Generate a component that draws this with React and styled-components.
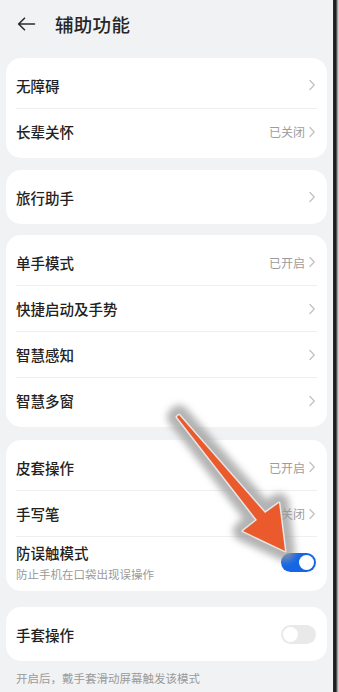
import React from "react";
import styled, { createGlobalStyle } from "styled-components";

const GlobalStyle = createGlobalStyle`
  *, *::before, *::after {
    box-sizing: border-box;
  }
  html, body {
    margin: 0;
    padding: 0;
    background: #f1f2f4;
  }
  body {
    font-family: "Noto Sans CJK SC", "Noto Sans", sans-serif;
  }
`;

const Frame = styled.div`
  position: relative;
  display: flex;
  width: 339px;
  height: 692px;
  overflow: hidden;
  background: #f1f2f4;
`;

const Screen = styled.div`
  width: 333px;
  display: flex;
  flex-direction: column;

  & > * {
    flex-shrink: 0;
  }
`;

const Bezel = styled.div`
  width: 6px;
  background: linear-gradient(to right, #2a2a2a 0, #1a1a1a 3px, #8a8a8a 4px, #e6e6e6 6px);
`;

const Header = styled.div`
  display: flex;
  align-items: center;
  height: 48px;
  padding: 0 0 0 17px;
  gap: 19px;
`;

const Title = styled.h1`
  margin: 0;
  font-size: 18.5px;
  font-weight: 500;
  color: #262626;
  letter-spacing: 0.3px;
`;

const Card = styled.div`
  margin: ${(p) => p.$top}px 6px 0 6px;
  padding: 4px 0;
  background: #fff;
  border-radius: 15px;
`;

const Row = styled.div`
  display: flex;
  align-items: center;
  justify-content: space-between;
  height: ${(p) => (p.$tall ? 51 : 46)}px;
  margin: 0 10px 0 10px;
  padding: 0 1px 0 0;
  border-top: ${(p) => (p.$first ? "none" : "1px solid #efefef")};
`;

const TextCol = styled.div`
  display: flex;
  flex-direction: column;
  gap: 3px;
`;

const Label = styled.span`
  font-size: 14.5px;
  font-weight: 500;
  color: #222;
`;

const Sub = styled.span`
  font-size: 11.5px;
  color: #9a9a9a;
`;

const Right = styled.div`
  display: flex;
  align-items: center;
  gap: 3px;
`;

const Value = styled.span`
  font-size: 12px;
  color: #9c9c9c;
`;

const Switch = styled.div`
  position: relative;
  width: 35px;
  height: 19px;
  border-radius: 10px;
  background: ${(p) => (p.$on ? "#1466e6" : "#e9e9ea")};
  margin-right: 0;

  &::after {
    content: "";
    position: absolute;
    top: 2px;
    left: ${(p) => (p.$on ? "18px" : "2px")};
    width: 15px;
    height: 15px;
    border-radius: 50%;
    background: #fff;
  }
`;

const Footer = styled.p`
  margin: 9px 0 0 16px;
  font-size: 11.5px;
  line-height: 17px;
  color: #9a9a9a;
`;

const Overlay = styled.svg`
  position: absolute;
  left: 0;
  top: 0;
  pointer-events: none;
`;

const Chevron = () => (
  <svg width="8" height="12" viewBox="0 0 8 12">
    <path d="M2 1.5 L6.2 6 L2 10.5" fill="none" stroke="#c2c2c2" strokeWidth="1.3" strokeLinecap="round" strokeLinejoin="round" />
  </svg>
);

const BackIcon = () => (
  <svg width="19" height="14" viewBox="0 0 19 14">
    <path d="M17.5 7 H1.8 M7.5 1.2 L1.6 7 L7.5 12.8" fill="none" stroke="#2d2d2d" strokeWidth="1.6" strokeLinecap="round" strokeLinejoin="round" />
  </svg>
);

const NavRow = ({ label, value, first }) => (
  <Row $first={first}>
    <Label>{label}</Label>
    <Right>
      {value && <Value>{value}</Value>}
      <Chevron />
    </Right>
  </Row>
);

const arrowPts = "179,415 265,513 279,503 285,551 243,531 257,520 177,417";

const App = () => (
  <Frame>
    <GlobalStyle />
    <Screen>
      <Header>
        <BackIcon />
        <Title>辅助功能</Title>
      </Header>

      <Card $top={10}>
        <NavRow first label="无障碍" />
        <NavRow label="长辈关怀" value="已关闭" />
      </Card>

      <Card $top={12}>
        <NavRow first label="旅行助手" />
      </Card>

      <Card $top={11}>
        <NavRow first label="单手模式" value="已开启" />
        <NavRow label="快捷启动及手势" />
        <NavRow label="智慧感知" />
        <NavRow label="智慧多窗" />
      </Card>

      <Card $top={13}>
        <NavRow first label="皮套操作" value="已开启" />
        <NavRow label="手写笔" value="已关闭" />
        <Row $tall>
          <TextCol>
            <Label>防误触模式</Label>
            <Sub>防止手机在口袋出现误操作</Sub>
          </TextCol>
          <Switch $on />
        </Row>
      </Card>

      <Card $top={16}>
        <Row $first>
          <Label>手套操作</Label>
          <Switch />
        </Row>
      </Card>

      <Footer>开启后，戴手套滑动屏幕触发该模式</Footer>
    </Screen>
    <Bezel />

    <Overlay width="339" height="692" viewBox="0 0 339 692">
      <defs>
        <filter id="glow" x="-20%" y="-20%" width="140%" height="140%">
          <feGaussianBlur stdDeviation="3.5" />
        </filter>
      </defs>
      <polygon points={arrowPts} fill="#9a9a9a" stroke="#9a9a9a" strokeWidth="20" strokeLinejoin="round" opacity="0.75" filter="url(#glow)" />
      <polygon points={arrowPts} fill="#e0e0e0" stroke="#e6e6e6" strokeWidth="3" strokeLinejoin="round" />
      <polygon points={arrowPts} fill="#ea5a2c" />
    </Overlay>
  </Frame>
);

export default App;
